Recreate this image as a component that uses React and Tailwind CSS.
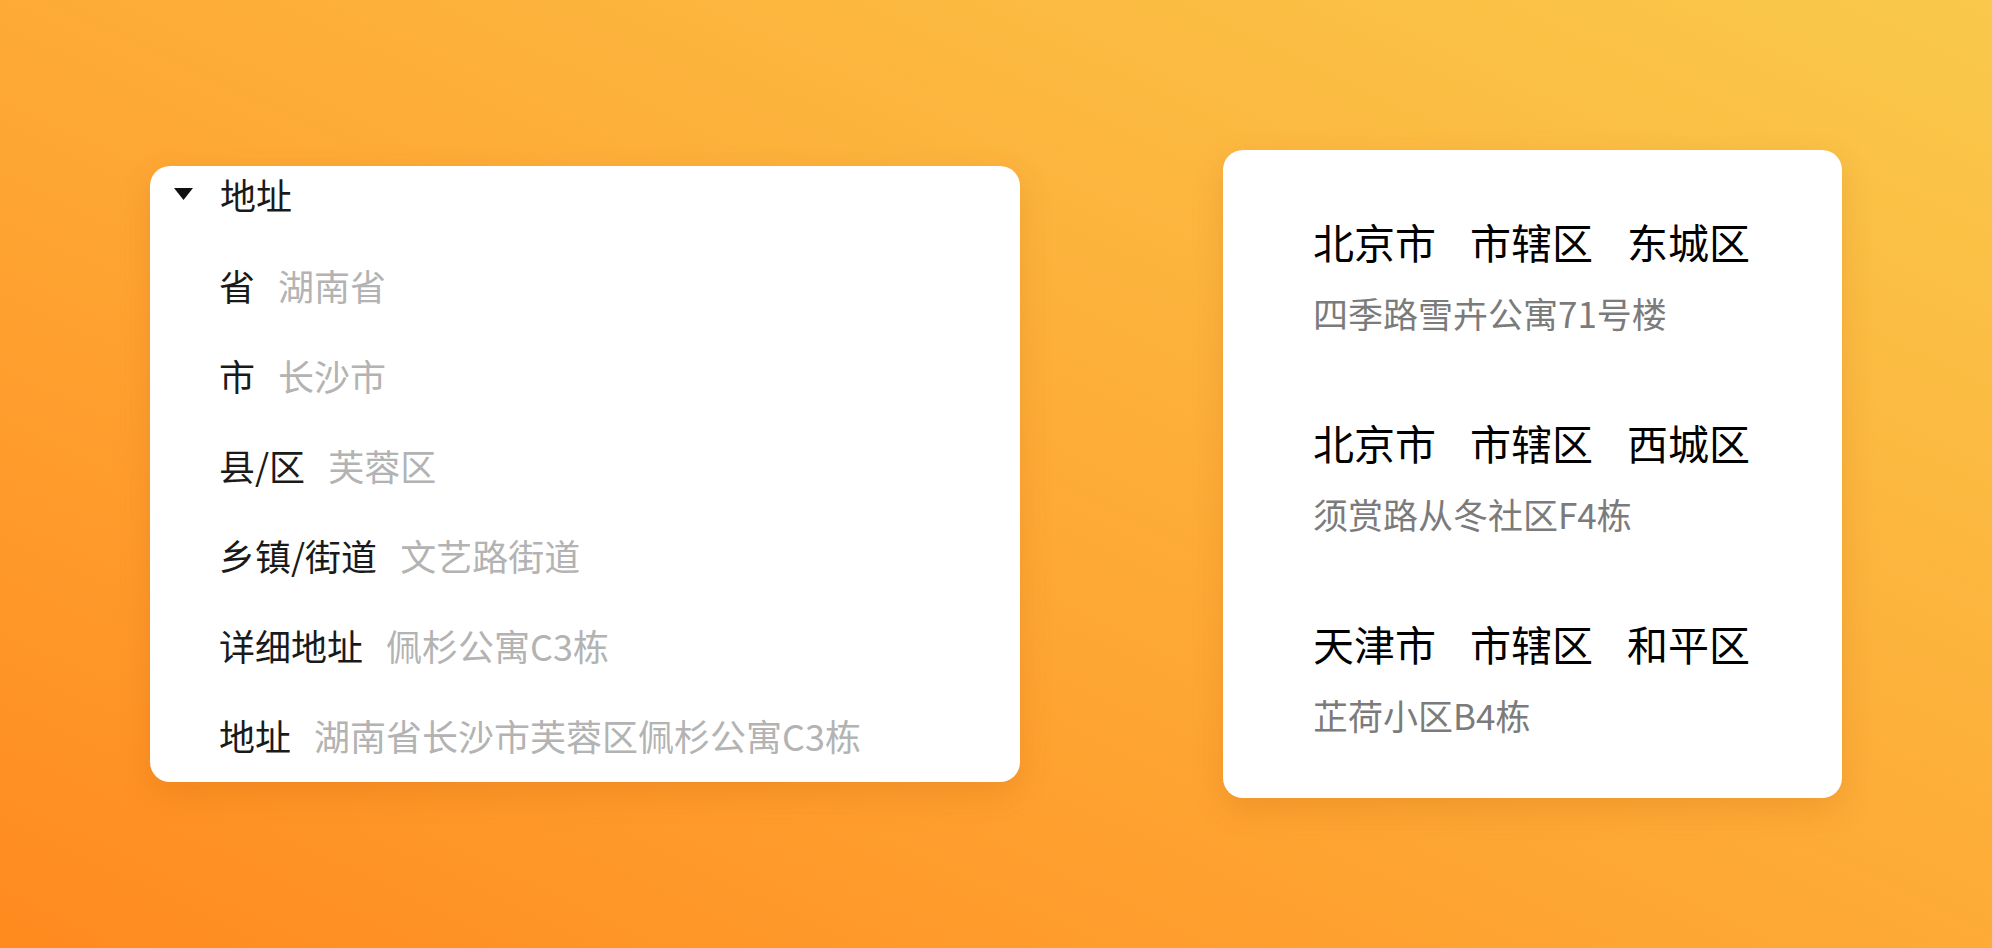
const fields = [
  { label: '省', value: '湖南省' },
  { label: '市', value: '长沙市' },
  { label: '县/区', value: '芙蓉区' },
  { label: '乡镇/街道', value: '文艺路街道' },
  { label: '详细地址', value: '佩杉公寓C3栋' },
  { label: '地址', value: '湖南省长沙市芙蓉区佩杉公寓C3栋' },
];

const addresses = [
  { parts: ['北京市', '市辖区', '东城区'], detail: '四季路雪卉公寓71号楼' },
  { parts: ['北京市', '市辖区', '西城区'], detail: '须赏路从冬社区F4栋' },
  { parts: ['天津市', '市辖区', '和平区'], detail: '芷荷小区B4栋' },
];

const font = { fontFamily: '"Noto Sans CJK SC", "Noto Sans", sans-serif' };

const AddressDetails = () => {
  return (
    <div className="w-[870px] h-[616px] rounded-[20px] bg-white shadow-[0_12px_32px_rgba(180,80,0,0.18)] pl-[24px] pb-[2px]">
      {/* Summary */}
      <div className="flex h-[56px] items-center">
        <svg width="19" height="12" viewBox="0 0 19 12" className="mr-[27px] shrink-0">
          <path d="M0 0 L19 0 L9.5 12 Z" fill="#111" />
        </svg>
        <span className="text-[36px] leading-none text-[#1a1a1a]">地址</span>
      </div>

      <div className="mt-[18px] pl-[45px]">
        {fields.map((f) => (
          <div key={f.label} className="flex h-[90px] items-center gap-[23px] text-[36px] leading-none">
            <span className="text-[#1a1a1a]">{f.label}</span>
            <span className="text-[#b3b3b3]">{f.value}</span>
          </div>
        ))}
      </div>
    </div>
  );
};

const AddressList = () => {
  return (
    <div className="w-[619px] h-[648px] rounded-[20px] bg-white shadow-[0_12px_32px_rgba(180,80,0,0.18)] pl-[90px] pt-[61px] pb-[59px]">
      <div className="flex flex-col gap-[75px]">
        {addresses.map((a, i) => (
          <div key={i} className="flex flex-col gap-[16px]">
            <div className="flex h-[60px] items-center gap-[34px] text-[41px] leading-none text-black">
              {a.parts.map((p, j) => (
                <span key={j}>{p}</span>
              ))}
            </div>
            <div className="flex h-[50px] items-center text-[35px] leading-none text-[#7b7b7b]">
              {a.detail}
            </div>
          </div>
        ))}
      </div>
    </div>
  );
};

export default function App() {
  return (
    <div
      className="flex h-[948px] w-[1992px] items-center justify-between overflow-hidden bg-linear-to-tr from-[#ff8a1e] to-[#f9c94b] px-[150px]"
      style={font}
    >
      <AddressDetails />
      <AddressList />
    </div>
  );
}
